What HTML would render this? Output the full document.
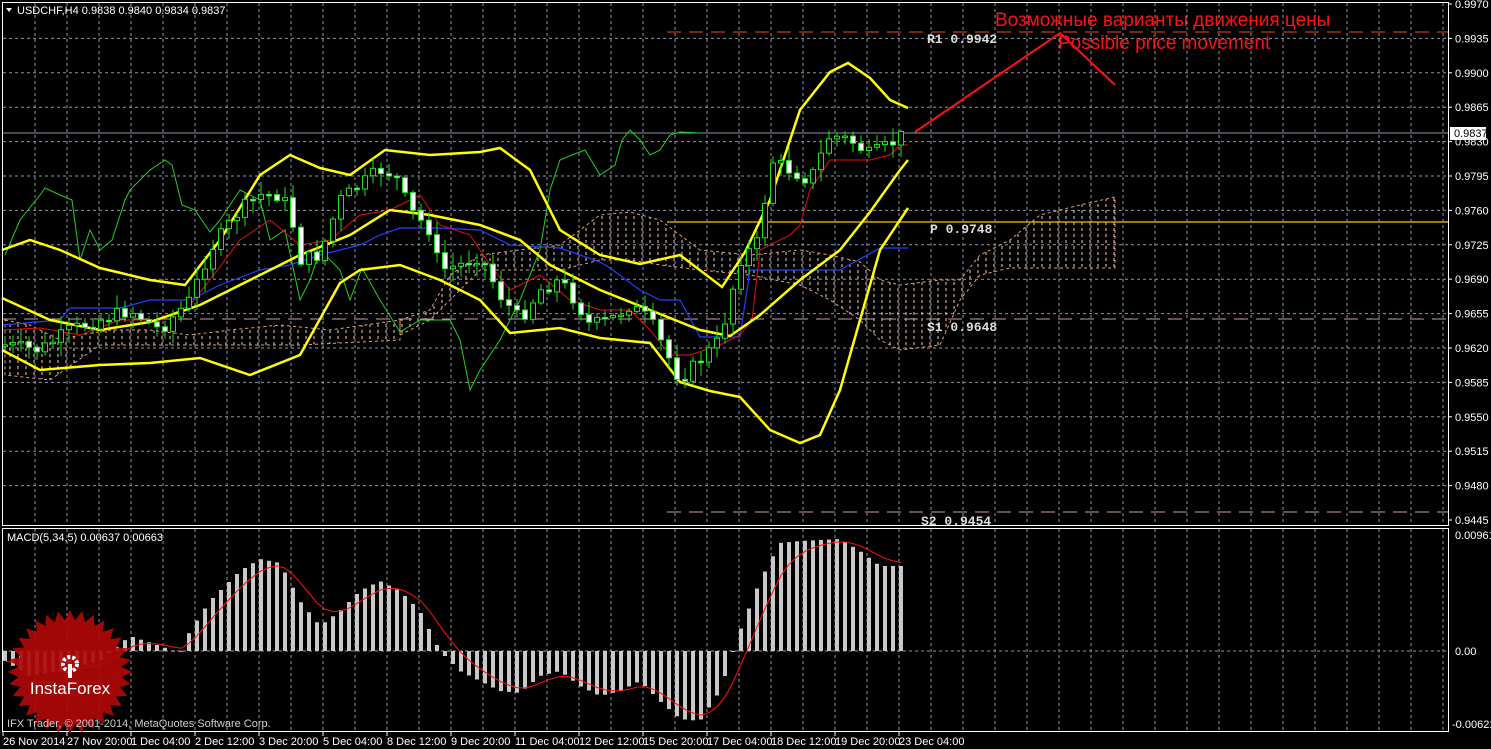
<!DOCTYPE html>
<html><head><meta charset="utf-8"><style>
html,body{margin:0;padding:0;background:#000;width:1491px;height:749px;overflow:hidden}
svg{display:block}
text{font-family:"Liberation Sans",sans-serif;font-size:11px;fill:#fff}
.m{font-family:"Liberation Mono",monospace;font-size:13px;font-weight:bold;fill:#ddd}
</style></head><body>
<svg id="s" width="1491" height="749" xmlns="http://www.w3.org/2000/svg">
<defs>
<pattern id="cl" width="8" height="6" patternUnits="userSpaceOnUse"><line x1="2" y1="0" x2="2" y2="3" stroke="#f0d0c0" stroke-width="1"/></pattern>
</defs>
<rect x="0" y="0" width="1491" height="749" fill="#000"/>
<g id="grid" stroke="#8a96a8" stroke-dasharray="3,3" stroke-width="1"></g>
<g id="cloud"></g>
<line x1="667" y1="32" x2="1448" y2="32" stroke="#e05020" stroke-dasharray="14,8"/>
<line x1="667" y1="222" x2="1448" y2="222" stroke="#ffc000" stroke-width="1.3"/>
<line x1="2" y1="319" x2="1448" y2="319" stroke="#c8a0a0" stroke-dasharray="14,8"/>
<line x1="667" y1="512" x2="1448" y2="512" stroke="#c8a0a0" stroke-dasharray="14,8"/>
<line x1="2" y1="133" x2="1448" y2="133" stroke="#8a96a8"/>
<g id="lines" fill="none"></g>
<g id="candles"></g>
<g id="macd"></g>
<text class="m" x="927" y="43">R1 0.9942</text>
<text class="m" x="930" y="233">P 0.9748</text>
<text class="m" x="927" y="331">S1 0.9648</text>
<text class="m" x="921" y="525">S2 0.9454</text>
<polyline points="915,132 1060,33 1115,85" fill="none" stroke="#ff1010" stroke-width="2"/>
<text x="995" y="26" style="font-size:19px;fill:#ff1010">Возможные варианты движения цены</text>
<text x="1058" y="49" style="font-size:19px;fill:#ff1010">Possible price movement</text>
<rect x="2.5" y="2.5" width="1446" height="523" fill="none" stroke="#fff"/>
<rect x="2.5" y="528.5" width="1446" height="203" fill="none" stroke="#fff"/>
<polygon points="6,8 12,8 9,12" fill="#fff"/>
<text x="17" y="14">USDCHF,H4  0.9838 0.9840 0.9834 0.9837</text>
<text x="7" y="541">MACD(5,34,5) 0.00637 0.00663</text>
<g id="axis"></g>
<rect x="1450" y="127" width="36" height="13" fill="#fff"/>
<text x="1454" y="137" style="fill:#000">0.9837</text>
<text x="1455" y="539">0.00961</text>
<text x="1455" y="655">0.00</text>
<text x="1452" y="728">-0.00621</text>
<g transform="translate(70,672)">
<polygon id="star" fill="#b00808" opacity="0.92"/>
<circle r="7" cy="-8" fill="none" stroke="#fff" stroke-width="4" stroke-dasharray="3,2"/>
<rect x="-2" y="-8" width="4" height="14" fill="#fff"/>
<text x="0" y="22" text-anchor="middle" style="font-size:17px;fill:#fff">InstaForex</text>
</g>
<text x="7" y="727" style="fill:#ccc">IFX Trader, © 2001-2014, MetaQuotes Software Corp.</text>
</svg>
<script>
(function(){
var NS="http://www.w3.org/2000/svg";
function el(p,t,a){var e=document.createElementNS(NS,t);for(var k in a)e.setAttribute(k,a[k]);document.getElementById(p).appendChild(e);return e}
for(var x=35;x<1448;x+=32){el('grid','line',{x1:x,y1:3,x2:x,y2:525});el('grid','line',{x1:x,y1:529,x2:x,y2:731})}
var prices=["0.9970","0.9935","0.9900","0.9865","0.9830","0.9795","0.9760","0.9725","0.9690","0.9655","0.9620","0.9585","0.9550","0.9515","0.9480","0.9445"];
for(var i=0;i<16;i++){var y=4+i*34.4;if(i>0&&i<15)el('grid','line',{x1:3,y1:y,x2:1448,y2:y});
 el('axis','line',{x1:1448,y1:y,x2:1452,y2:y,stroke:'#fff'});var t=el('axis','text',{x:1455,y:y+4});t.textContent=prices[i]}
el('grid','line',{x1:3,y1:651,x2:1448,y2:651});
var tl=["26 Nov 2014","27 Nov 20:00","1 Dec 04:00","2 Dec 12:00","3 Dec 20:00","5 Dec 04:00","8 Dec 12:00","9 Dec 20:00","11 Dec 04:00","12 Dec 12:00","15 Dec 20:00","17 Dec 04:00","18 Dec 12:00","19 Dec 20:00","23 Dec 04:00"];
for(var i=0;i<tl.length;i++){var x=3+i*64;el('axis','line',{x1:x,y1:732,x2:x,y2:736,stroke:'#fff'});var t=el('axis','text',{x:x,y:745});t.textContent=tl[i]}
function interp(pts,x){for(var i=0;i<pts.length-1;i++){if(x>=pts[i][0]&&x<=pts[i+1][0]){var f=(x-pts[i][0])/(pts[i+1][0]-pts[i][0]);return pts[i][1]+f*(pts[i+1][1]-pts[i][1])}}return pts[x<pts[0][0]?0:pts.length-1][1]}
function pl(pts,c,w){el('lines','polyline',{points:pts.map(function(p){return p.join(',')}).join(' '),stroke:c,'stroke-width':w,fill:'none'})}
var cu=[[400,320],[430,310],[450,275],[480,255],[520,250],[560,245],[600,215],[630,212],[660,220],[700,250],[750,255],[800,250],[830,255],[860,262],[880,280],[900,285],[940,280],[960,280],[980,255],[1010,240],[1040,215],[1080,205],[1115,197]];
var cd=[[400,335],[430,320],[450,300],[480,270],[520,270],[560,270],[600,260],[630,260],[660,265],[700,270],[750,275],[800,285],[830,300],[860,320],[880,340],[900,350],[940,345],[960,300],[980,275],[1010,268],[1040,268],[1080,268],[1115,268]];
var cp=cu.map(function(p){return p.join(',')}).join(' ')+' '+cd.slice().reverse().map(function(p){return p.join(',')}).join(' ');
el('cloud','polygon',{points:cp,fill:'url(#cl)',stroke:'#e0a070','stroke-dasharray':'3,3','stroke-width':1});
var cl2=[[5,320],[30,325],[60,340],[80,335],[110,330],[150,330],[190,335],[230,330],[280,325],[330,330],[400,320]];
el('cloud','polygon',{points:cl2.map(function(p){return p.join(',')}).join(' ')+' 400,340 300,345 200,345 100,345 50,380 5,375',fill:'url(#cl)',stroke:'#e0a070','stroke-dasharray':'3,3'});
pl([[5,255],[20,220],[40,195],[45,188],[60,195],[72,200],[80,260],[90,230],[100,250],[112,240],[125,200],[130,190],[150,170],[165,160],[172,165],[182,205],[195,210],[210,232],[220,220],[240,190],[260,200],[270,240],[285,230],[300,300],[310,280],[320,250],[340,270],[350,300],[362,268],[380,300],[400,332],[420,320],[450,320],[460,340],[470,390],[480,370],[500,340],[520,300],[540,250],[550,190],[560,160],[572,155],[585,150],[600,175],[615,165],[622,140],[630,130],[640,140],[650,155],[660,150],[670,135],[680,132],[700,133]],'#20d020',1);
pl([[2,325],[60,320],[70,308],[120,308],[150,300],[190,300],[220,285],[260,270],[290,265],[320,255],[360,245],[380,235],[400,228],[440,228],[480,230],[510,245],[560,248],[600,262],[610,268],[640,290],[660,300],[680,300],[700,337],[740,337],[750,270],[840,270],[880,248],[908,248]],'#2040ff',1.2);
pl([[2,330],[40,328],[80,335],[120,320],[160,320],[190,305],[210,280],[240,240],[270,220],[300,245],[330,240],[360,215],[390,210],[420,195],[440,225],[470,235],[490,265],[510,290],[540,275],[570,300],[600,310],[630,310],[650,330],[670,355],[690,355],[720,345],[740,335],[752,320],[760,250],[790,235],[800,225],[810,190],[830,160],[870,160],[890,155],[900,145],[908,145]],'#e01010',1);
pl([[2,250],[30,240],[60,250],[100,268],[150,280],[185,285],[220,240],[260,175],[290,155],[320,168],[350,175],[385,150],[430,155],[480,152],[500,148],[530,170],[560,230],[600,255],[640,264],[680,255],[722,287],[745,252],[770,200],[800,110],[830,72],[848,63],[870,78],[890,100],[908,108]],'#ffff00',2.5);
pl([[2,298],[50,320],[100,330],[150,322],[200,305],[250,280],[300,255],[350,235],[390,210],[430,215],[480,225],[520,240],[550,265],[600,290],[650,310],[700,330],[730,336],[760,315],[800,280],[840,250],[870,212],[900,170],[908,160]],'#ffff00',2.5);
pl([[2,350],[40,370],[100,365],[150,363],[200,358],[250,375],[300,355],[340,283],[360,270],[400,265],[440,280],[480,300],[510,333],[560,328],[600,338],[650,343],[680,382],[710,391],[740,397],[770,430],[800,443],[820,435],[840,390],[860,320],[880,250],[908,208]],'#ffff00',2.5);
var pts=[[5,345],[40,350],[70,330],[100,320],[130,310],[160,330],[190,300],[210,250],[240,210],[260,195],[280,195],[290,210],[300,260],[320,255],[340,200],[360,185],[380,170],[395,175],[410,210],[430,230],[440,270],[460,265],[480,255],[500,295],[520,320],[540,290],[560,280],[575,300],[590,325],[610,320],[630,305],[650,320],[670,360],[680,380],[700,360],[720,340],[740,260],[760,240],[770,160],[790,170],[810,180],[830,135],[850,140],[870,155],[890,145],[905,133]];
var seed=7;function rnd(){seed=(seed*9301+49297)%233280;return seed/233280}
var prev=interp(pts,5);
for(var x=5;x<=905;x+=8){var c=interp(pts,x)+(rnd()-0.5)*14;if(x==905)c=133;var o=prev;var tp=Math.min(o,c),bt=Math.max(o,c);
 var hi=tp-rnd()*12-2,lo=bt+rnd()*12+2;
 el('candles','line',{x1:x,y1:hi,x2:x,y2:lo,stroke:'#20e020'});
 var h=Math.max(bt-tp,1.5);
 el('candles','rect',{x:x-2.5,y:tp,width:5,height:h,fill:(c>o?'#fff':'#000'),stroke:'#20e020','stroke-width':1});
 prev=c}
var mv=[[5,-10],[30,-25],[60,-20],[100,-10],[130,15],[160,5],[180,-2],[190,20],[210,50],[240,80],[260,92],[280,88],[300,50],[320,25],[340,40],[360,60],[380,70],[400,60],[420,40],[440,0],[460,-20],[480,-30],[500,-40],[520,-42],[540,-25],[560,-20],[580,-35],[600,-45],[620,-40],[640,-30],[660,-50],[680,-68],[700,-70],[720,-40],[740,20],[760,70],[780,108],[800,110],[840,112],[860,100],[880,85],[905,85]];
var sig=[],sv=interp(mv,5);
for(var x=5;x<=905;x+=8){var v=interp(mv,x);el('macd','rect',{x:x-2,y:v>0?651-v:651,width:4,height:Math.max(Math.abs(v),1),fill:'#c8c8c8'});sv=sv+(v-sv)*0.33;sig.push([x,651-sv])}
el('macd','polyline',{points:sig.map(function(p){return p.join(',')}).join(' '),fill:'none',stroke:'#ff1010','stroke-width':1});
var sp=[];for(var i=0;i<64;i++){var r=i%2?52:62,a=i*Math.PI/32;sp.push((r*Math.cos(a)).toFixed(1)+','+(r*Math.sin(a)).toFixed(1))}
document.getElementById('star').setAttribute('points',sp.join(' '));
})();
</script>
</body></html>
